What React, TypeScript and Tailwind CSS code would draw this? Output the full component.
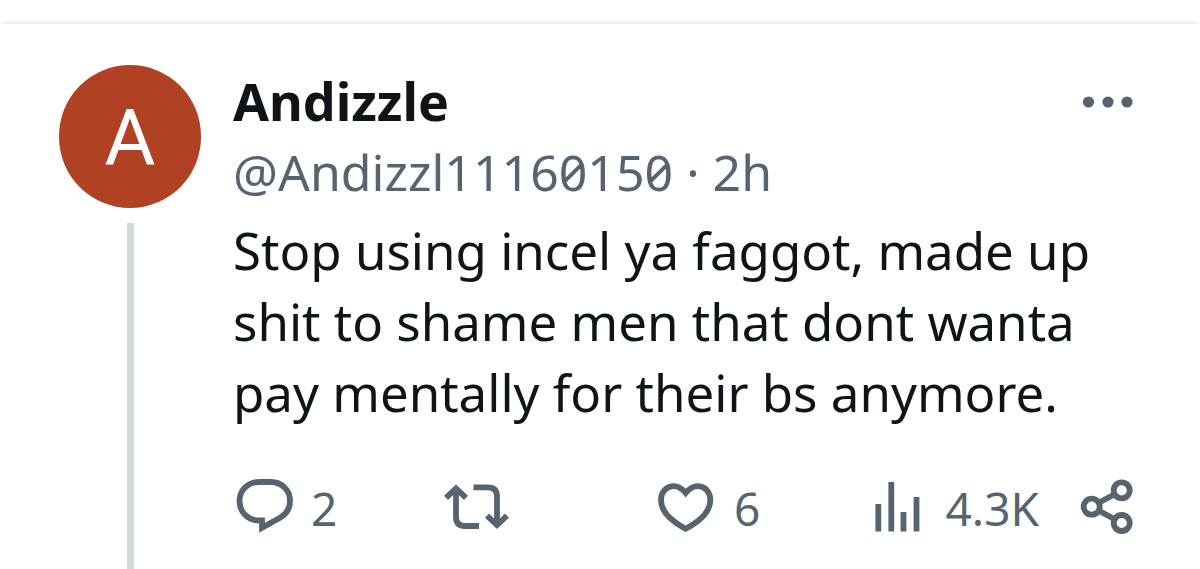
import type { ReactNode } from 'react';

interface ActionProps {
  label: string;
  count?: string;
  children: ReactNode;
}

function Action({ label, count, children }: ActionProps) {
  return (
    <div className="grow basis-0">
      <button type="button" aria-label={label} className="flex items-center gap-4 text-[#576470]">
        {children}
        {count && <span className="pt-1 text-[46px] leading-[56px]">{count}</span>}
      </button>
    </div>
  );
}

const iconProps = {
  height: 58,
  fill: 'none',
  stroke: 'currentColor',
  strokeWidth: 5.8,
  className: 'shrink-0 overflow-visible',
} as const;

function ReplyIcon() {
  return (
    <svg width="62" viewBox="0 0 62 58" {...iconProps}>
      <path d="M26 5H38C49 5 57 13.5 57 24C57 31 53.5 37 47 40.7L29 50.8V43.5H26C15 43.5 6.5 35 6.5 24S15 5 26 5Z" />
    </svg>
  );
}

function RepostIcon() {
  return (
    <svg width="62" viewBox="0 0 62 58" {...iconProps}>
      <path d="M1 20.8L11 11.4L21 20.8M11 12V40Q11 49 20 49H34" />
      <path d="M42 38.7L52 48L62 38.7M52 47.5V19.5Q52 10.4 43 10.4H28.5" />
    </svg>
  );
}

function LikeIcon() {
  return (
    <svg width="62" viewBox="0 0 62 58" {...iconProps}>
      <path d="M29.7 16C26 11.5 21.5 9 17 9.2C10 9.5 5 15.5 5 23C5 34 15 44 29.7 51.7C44.5 44 54.3 34 54.3 23C54.3 15.5 49.5 9.5 42.5 9.2C38 9 33.5 11.5 29.7 16Z" />
    </svg>
  );
}

function ViewsIcon() {
  return (
    <svg width="62" viewBox="0 0 62 58" {...iconProps}>
      <path d="M10.3 27V54.5M23.3 5V54.5M35.5 35V54.5M48.5 20V54.5" />
    </svg>
  );
}

function ShareIcon() {
  return (
    <svg width="54" viewBox="0 0 54 58" {...iconProps}>
      <circle cx="42.7" cy="13.3" r="8" />
      <circle cx="12.7" cy="29.7" r="8" />
      <circle cx="42.7" cy="46" r="8" />
      <path d="M19.7 25.8L35.7 17.2M19.7 33.6L35.7 42.2" />
    </svg>
  );
}

export default function App() {
  return (
    <main className="bg-white pt-[21px] font-['Noto_Sans',sans-serif] text-[#0f1419]">
      <article className="mx-[3px] flex gap-8 border-t-3 border-[#eff1f2] pt-[41px] pr-16 pl-14">
        <div className="flex w-[142px] shrink-0 flex-col items-center gap-[15px]">
          <div className="flex h-[143px] w-full items-center justify-center rounded-full bg-[#b04122] pt-1 font-['Roboto',sans-serif] text-[78px] text-white">
            A
          </div>
          <div className="w-[7px] grow bg-[#d1d9dd]" />
        </div>
        <div className="min-w-0 grow pb-9">
          <header className="flex items-start justify-between">
            <div>
              <h1 className="text-[52px] leading-[72px] font-bold">Andizzle</h1>
              <p className="text-[50px] leading-[70px] text-[#576470] slashed-zero">@Andizzl11160150 · 2h</p>
            </div>
            <button type="button" aria-label="More" className="mt-[30px] text-[#576470]">
              <svg width="50" height="14" viewBox="0 0 50 14" fill="currentColor">
                <circle cx="5.5" cy="7" r="5.6" />
                <circle cx="25" cy="7" r="5.6" />
                <circle cx="44" cy="7" r="5.6" />
              </svg>
            </button>
          </header>
          <p className="mt-2 text-[51px] leading-[71px]">
            Stop using incel ya faggot, made up
            <br />
            shit to shame men that dont wanta
            <br />
            pay mentally for their bs anymore.
          </p>
          <footer className="mt-12 flex items-center">
            <Action label="Reply" count="2"><ReplyIcon /></Action>
            <Action label="Repost"><RepostIcon /></Action>
            <Action label="Like" count="6"><LikeIcon /></Action>
            <Action label="Views" count="4.3K"><ViewsIcon /></Action>
            <button type="button" aria-label="Share" className="text-[#576470]">
              <ShareIcon />
            </button>
          </footer>
        </div>
      </article>
    </main>
  );
}
